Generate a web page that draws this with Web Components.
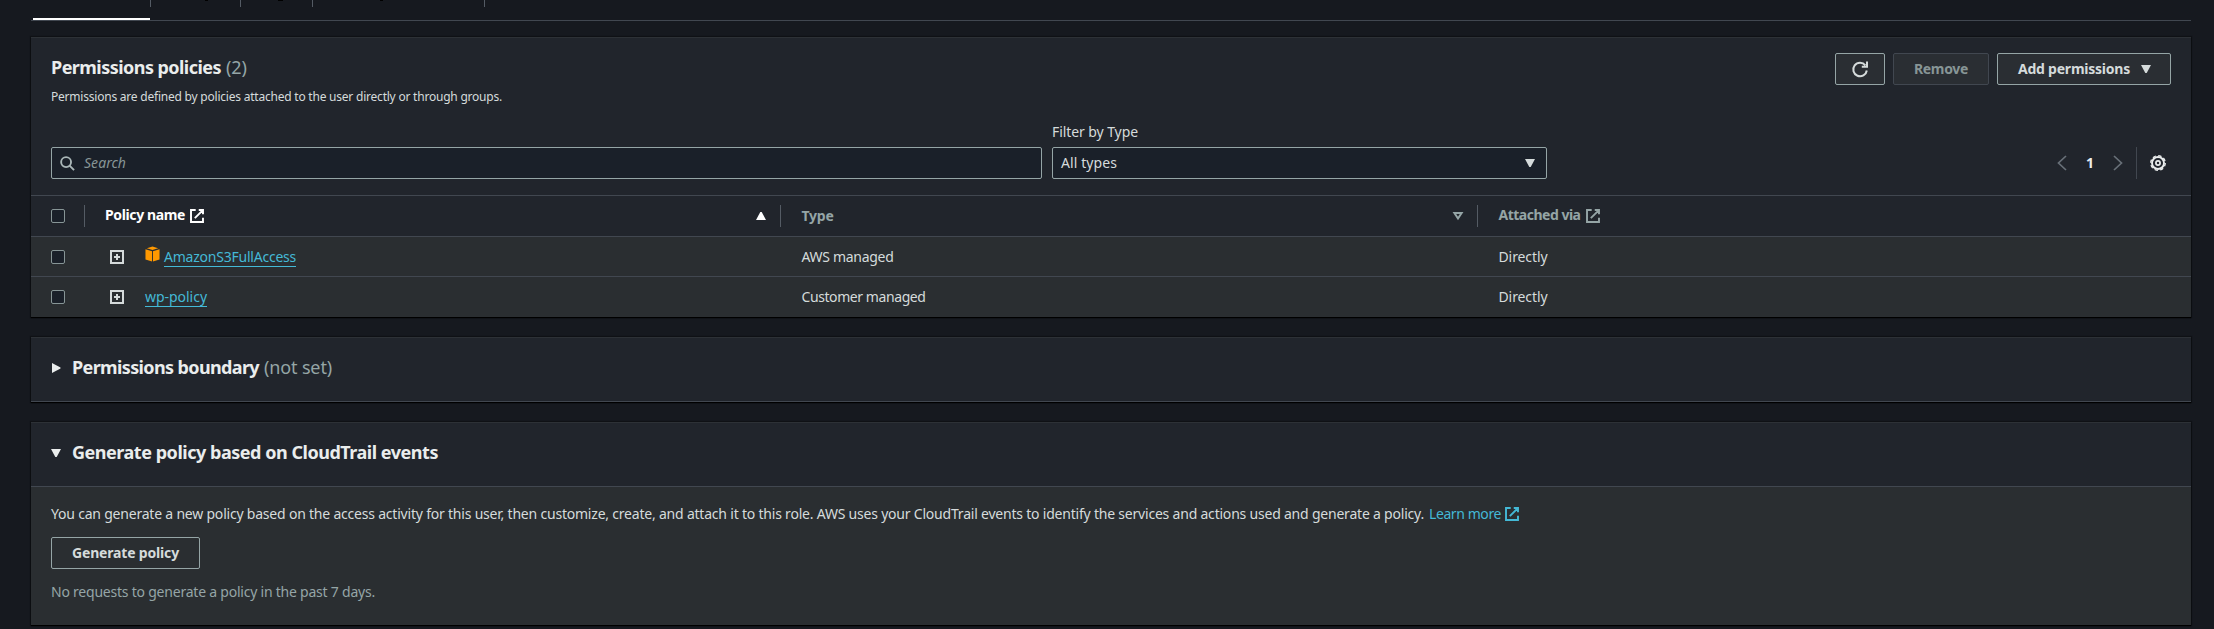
<!DOCTYPE html>
<html lang="en"><head><meta charset="utf-8"><title>Permissions</title>
<style>
html,body{margin:0;height:629px;overflow:hidden;background:#16191f}
body{font-family:"Noto Sans","Open Sans",sans-serif;font-size:14px;line-height:22px;color:#d5dbdb}
</style></head><body>
<iam-page></iam-page>
<script>
const define=(name,html,after)=>{
  const t=document.createElement('template');t.innerHTML=html;
  customElements.define(name,class extends HTMLElement{
    connectedCallback(){
      if(this.shadowRoot)return;
      this.attachShadow({mode:'open'}).append(t.content.cloneNode(true));
      if(after)after.call(this,this.shadowRoot);
    }
  });
};

/* Single-line label whose tracking is tuned so that it fills the width "w". */
define('ui-label',`<style>:host{display:inline-block;white-space:pre;flex:none}span{display:inline-block}</style><span><slot></slot></span>`,function(r){
  const w=+this.getAttribute('w'),s=r.querySelector('span');
  if(!w)return;
  const n=this.textContent.length,nat=s.getBoundingClientRect().width;
  s.style.letterSpacing=((w-nat)/n)+'px';
  this.style.width=w+'px';
});

const icons={
  external:'<path d="M6.500 1.150H1.150v13.700h13.700V10M10 1.150h4.850V6M14.500 1.500L5.500 10.500" stroke-width="2.200"/>',
  refresh:'<path d="M14.800 9.500A6.800 6.800 0 1 1 13.400 4.300M15 .5v5.200h-5.200"/>',
  search:'<circle cx="6.500" cy="6.500" r="5.300"/><path d="M10.200 10.200L15 15"/>',
  left:'<path d="M12 1L4.500 8l7.500 7"/>',
  right:'<path d="M4 1l7.500 7L4 15"/>',
  plus:'<path d="M2 2h12v12H2zM8 5v6M5 8h6"/>',
  down:'<path class="f" d="M3 4h10L8.700 12H7.300z"/>',
  play:'<path class="f" d="M4 3v10l8.500-4.500v-1z"/>',
  up:'<path class="f" d="M3 12h10L8.700 4H7.300z"/>',
  sort:'<path d="M4.400 5h7.200l-3.600 5.500z"/>',
  gear:'<circle cx="8" cy="8" r="2.100" stroke-width="1.700"/><circle cx="8" cy="8" r="6" stroke-width="1.900"/><circle cx="8" cy="8" r="7.300" stroke-width="1.300" stroke-dasharray="3.400 2.333"/>',
  cube:'<path class="f" d="M8 0l6 1.800L8 3.600 2 1.800zM.5 3l7 2v11l-7-2.200zM15.500 3l-7 2v11l7-2.200z"/>'
};
define('ui-icon',`<style>:host{display:block;width:16px;height:16px;flex:none}svg{display:block;width:100%;height:100%;overflow:visible;fill:none;stroke:currentColor;stroke-width:var(--sw,2)}.f{fill:currentColor;stroke:none}</style><svg viewBox="0 0 16 16"></svg>`,function(r){
  r.querySelector('svg').innerHTML=icons[this.getAttribute('name')];
});

define('ui-button',`<style>
:host{display:flex;box-sizing:border-box;height:32px;align-items:center;padding:0 20px;border:1px solid #95a5a6;border-radius:2px;color:#d5dbdb;background:#2a2e33;font-weight:700;flex:none}
:host([disabled]){border-color:#414750;color:#879596}
:host([plain]){background:transparent}
</style><slot></slot>`);

define('ui-checkbox',`<style>:host{display:block;box-sizing:border-box;width:14px;height:14px;border:1px solid #879596;border-radius:2px;background:#1a2029;flex:none}</style>`);

define('ui-panel',`<style>
:host{display:flex;flex-direction:column;box-sizing:border-box;background:#2a2e31;box-shadow:0 1px 1px #000,0 0 1px 1px rgba(0,0,0,.3);flex:none}
.head{box-sizing:border-box;background:#21252c;border-top:1px solid #2d3136;border-bottom:1px solid #414750}
</style><div class="head"><slot name="head"></slot></div><slot></slot>`);

define('ui-heading',`<style>
:host{display:flex;height:63px;padding-left:17px;align-items:center;color:#eaeded;font-size:18px}
b{display:flex;padding-left:8px;padding-bottom:5px}ui-icon{margin-bottom:3px}
::slotted([slot=note]){color:#95a5a6;padding:0 0 5px 5px}
</style><ui-icon></ui-icon><b><slot></slot></b><slot name="note"></slot>`,function(r){
  const i=document.createElement('ui-icon');i.setAttribute('name',this.getAttribute('icon'));
  r.querySelector('ui-icon').replaceWith(i);
});

define('iam-tabs',`<style>
:host{display:block;height:21px;box-sizing:border-box;border-bottom:1px solid #414750;flex:none;overflow:hidden}
.r{display:flex;height:20px}
.t{box-sizing:border-box;height:20px;position:relative;display:flex}
.t:after{content:"";position:absolute;right:0;top:0;width:1px;height:7px;background:#545b64}
.t.a{border-bottom:2px solid #fff;margin-left:2px;width:117px}.t.a:after{right:-1px}
i{height:1px;background:#000}
</style><div class="r"><div class="t a"></div><div class="t" style="width:91px"><i style="width:3px;margin-left:55px"></i></div><div class="t" style="width:72px"><i style="width:5px;margin-left:37px"></i></div><div class="t" style="width:172px"><i style="width:3px;margin-left:67px"></i></div></div>`);

define('policy-head',`<style>
:host{display:flex;flex-direction:column;height:157px}
.top{display:flex;box-sizing:border-box;justify-content:space-between;padding:15px 20px 0;height:83px}
h2{display:flex;gap:5px;margin:0;font-size:18px;line-height:22px;padding-top:3px;color:#eaeded}
h2 ui-label+ui-label{font-weight:400;color:#95a5a6}
.d{font-size:12px;line-height:16px;margin-top:11px}
.b{display:flex;gap:8px}
.tools{display:flex;padding:0 20px;gap:10px;align-items:flex-end}
.in{display:flex;align-items:center;box-sizing:border-box;height:32px;border:1px solid #95a5a6;border-radius:2px;background:#1a2029}
.s{width:991px;padding-left:8px;gap:9px;color:#879596;font-style:italic}
.s ui-icon{color:#aab7b8;width:15px;height:15px}
.f{display:flex;flex-direction:column;gap:4px}
.sel{width:495px;padding:0 8px;justify-content:space-between}
.pg{margin-left:auto;display:flex;align-items:center;height:32px;color:#687078}
.pg i{width:1px;height:32px;background:#414750;margin:0 13px 0 10px}
.pg b{color:#eaeded;margin:0 16px;width:8px}
.pg ui-icon{--sw:1.700}.pg .g{color:#eaeded;margin-right:5px}
</style>
<div class="top"><div><h2><ui-label w="170">Permissions policies</ui-label><ui-label w="21">(2)</ui-label></h2>
<div class="d"><ui-label w="451">Permissions are defined by policies attached to the user directly or through groups.</ui-label></div></div>
<div class="b"><ui-button style="padding:0 16px"><ui-icon name="refresh"></ui-icon></ui-button><ui-button disabled><ui-label w="54">Remove</ui-label></ui-button><ui-button style="padding-right:16px;gap:8px"><ui-label w="112">Add permissions</ui-label><ui-icon name="down"></ui-icon></ui-button></div></div>
<div class="tools"><div class="in s"><ui-icon name="search"></ui-icon><ui-label w="42">Search</ui-label></div>
<div class="f"><ui-label w="86">Filter by Type</ui-label><div class="in sel"><ui-label w="56">All types</ui-label><ui-icon name="down"></ui-icon></div></div>
<div class="pg"><ui-icon name="left"></ui-icon><b>1</b><ui-icon name="right"></ui-icon><i></i><ui-icon class="g" name="gear"></ui-icon></div></div>`);

define('policy-table',`<style>
:host{display:block}
.r{display:grid;grid-template-columns:750px 697px 1fr;height:39px;border-top:1px solid #414750}
.r>div{display:flex;align-items:center;box-sizing:border-box}
.c1{padding-left:20px}
.c2,.c3{padding-left:20.500px}
.h{height:40px;background:#21252c;border-top:0;font-weight:700;color:#95a5a6}
.h .c1{color:#fff}
.h .n{padding-bottom:2px}
.v{width:1px;height:22px;background:#545b64;margin-left:auto;flex:none}
.a{display:flex;align-items:center;padding-left:44px;gap:20px}
.l{display:flex;gap:4px;color:#44b9d6}
.l ui-label{border-bottom:1px solid #44b9d6;line-height:19px;height:19px;margin-top:1px}
.l ui-icon{color:#f90}
.x{width:14px;height:14px;margin-left:5px}
.st{margin-left:auto}.st+.v{margin-left:0}
</style>
<div class="r h"><div class="c1"><ui-checkbox></ui-checkbox><span class="v" style="margin:0 20px 0 19px"></span><ui-label class="n" w="80">Policy name</ui-label><ui-icon class="x" name="external"></ui-icon><ui-icon class="st" name="up" style="margin-right:11px"></ui-icon><span class="v"></span></div>
<div class="c2"><ui-label w="32">Type</ui-label><ui-icon class="st" name="sort" style="margin-right:11px"></ui-icon><span class="v"></span></div>
<div class="c3"><ui-label class="n" w="82">Attached via</ui-label><ui-icon class="x" name="external"></ui-icon></div></div>
<div class="r"><div class="c1"><ui-checkbox></ui-checkbox><div class="a"><ui-icon name="plus"></ui-icon><div class="l"><ui-icon name="cube" style="width:15px"></ui-icon><ui-label w="132">AmazonS3FullAccess</ui-label></div></div></div><div class="c2"><ui-label w="92">AWS managed</ui-label></div><div class="c3"><ui-label w="49">Directly</ui-label></div></div>
<div class="r"><div class="c1"><ui-checkbox></ui-checkbox><div class="a"><ui-icon name="plus"></ui-icon><div class="l"><ui-label w="62">wp-policy</ui-label></div></div></div><div class="c2"><ui-label w="124">Customer managed</ui-label></div><div class="c3"><ui-label w="49">Directly</ui-label></div></div>`);

define('generate-body',`<style>
:host{display:flex;flex-direction:column;align-items:flex-start;height:138px;padding:16px 20px 0;box-sizing:border-box}
p{margin:0;display:flex;height:22px;align-items:center}
.k{color:#44b9d6;margin-left:5px}.x{color:#44b9d6;width:14px;height:14px;margin-left:4px}
ui-button{margin:12px 0 12px}.n{color:#95a5a6}
</style><p><ui-label w="1373">You can generate a new policy based on the access activity for this user, then customize, create, and attach it to this role. AWS uses your CloudTrail events to identify the services and actions used and generate a policy.</ui-label><ui-label class="k" w="72">Learn more</ui-label><ui-icon class="x" name="external"></ui-icon></p>
<ui-button plain><ui-label w="107">Generate policy</ui-label></ui-button><p class="n"><ui-label w="324">No requests to generate a policy in the past 7 days.</ui-label></p>`);

define('iam-page',`<style>
:host{display:flex;flex-direction:column;width:2160px;height:629px;margin-left:31px;overflow:visible}
ui-panel{margin-bottom:20px}
</style><iam-tabs></iam-tabs>
<ui-panel style="margin-top:16px;height:280px"><policy-head slot="head"></policy-head><policy-table></policy-table></ui-panel>
<ui-panel style="height:65px"><ui-heading slot="head" icon="play"><ui-label w="187">Permissions boundary</ui-label><ui-label slot="note" w="68">(not set)</ui-label></ui-heading></ui-panel>
<ui-panel style="height:203px;margin-bottom:0"><ui-heading slot="head" icon="down"><ui-label w="366">Generate policy based on CloudTrail events</ui-label></ui-heading><generate-body></generate-body></ui-panel>`);
</script></body></html>
